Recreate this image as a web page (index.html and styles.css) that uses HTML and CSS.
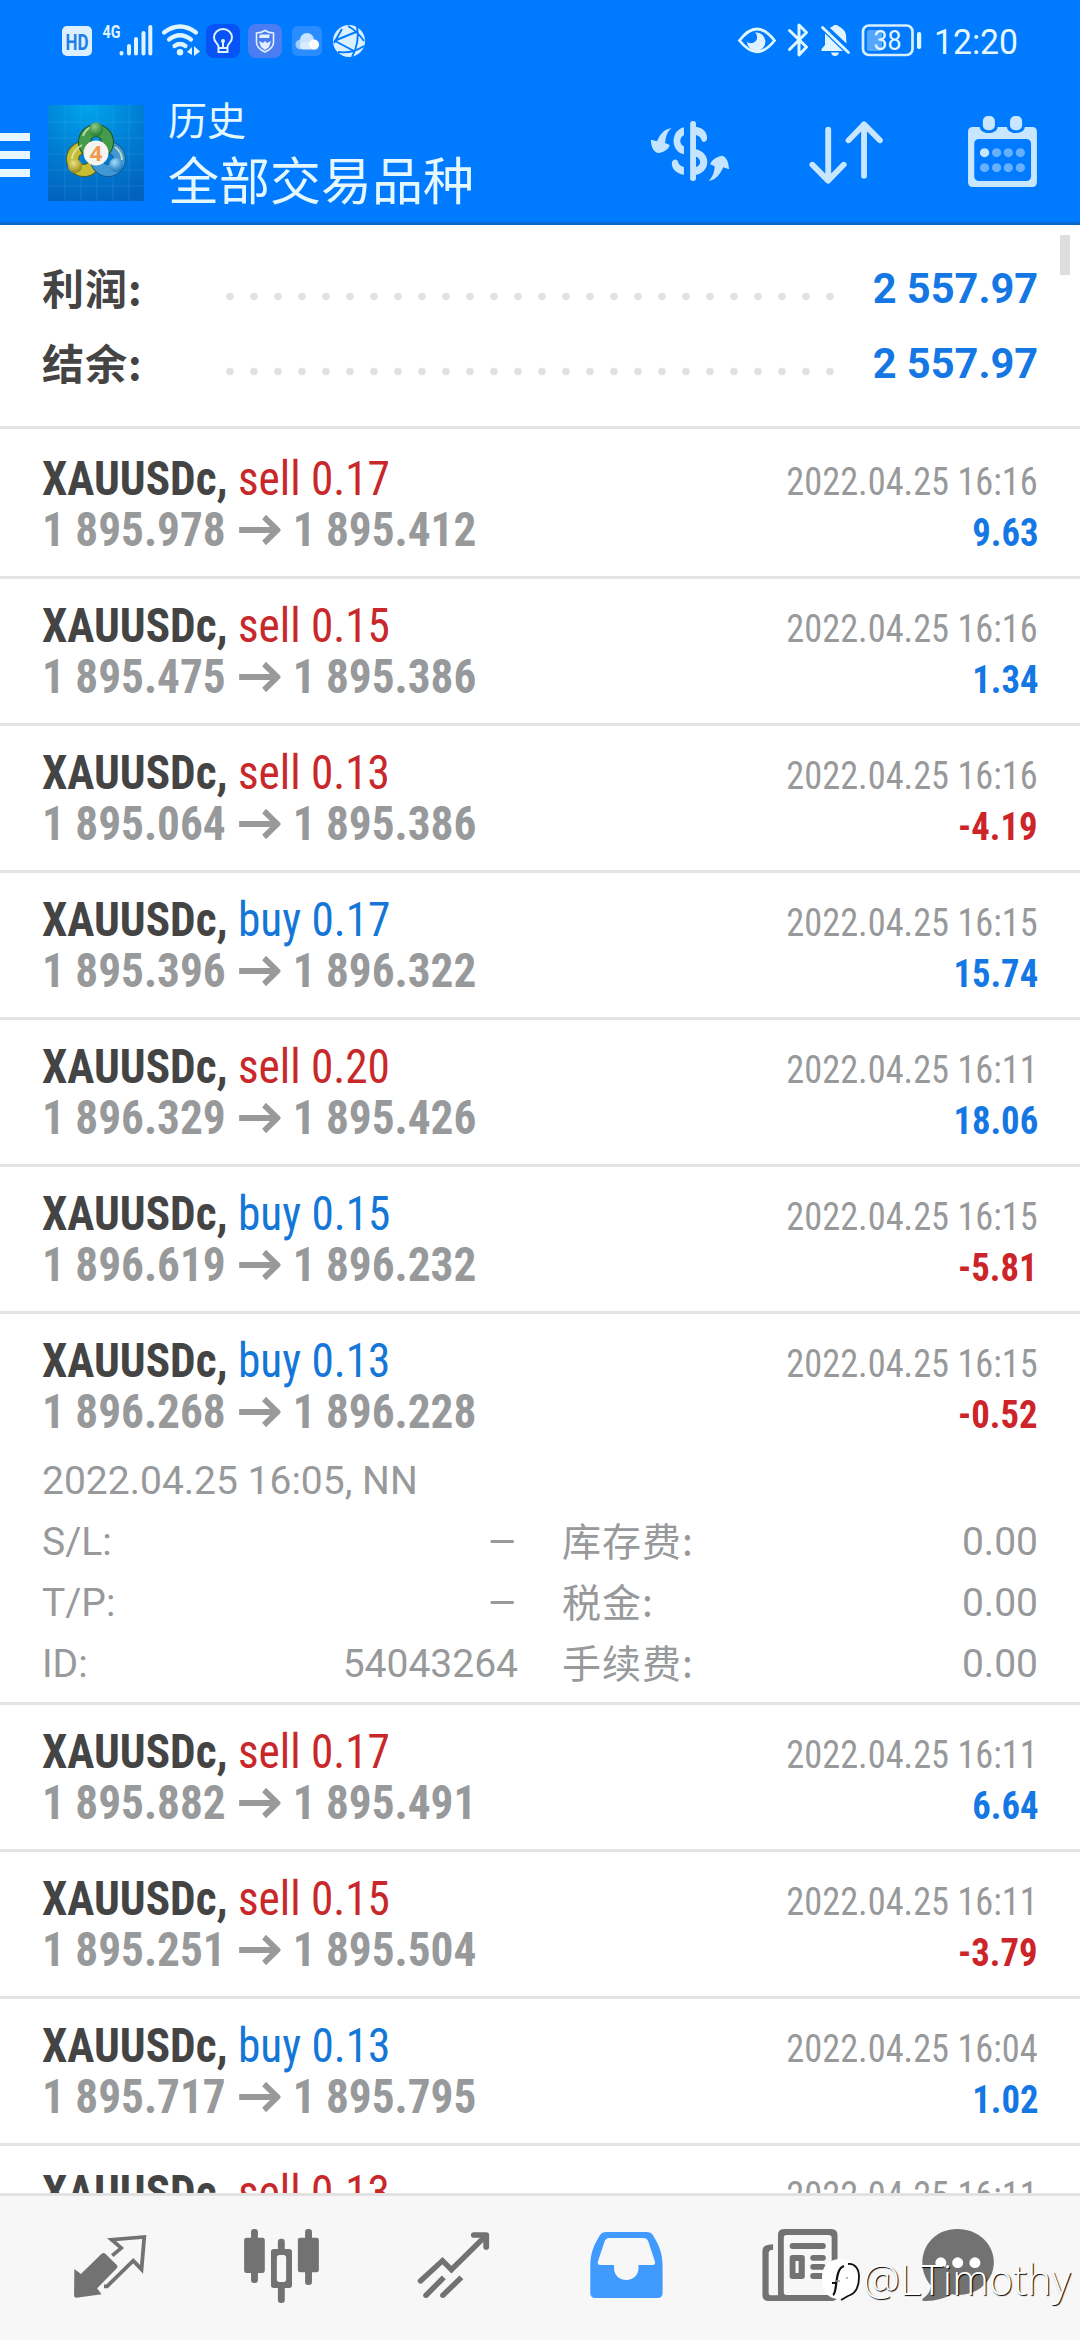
FILE: index.html
```html
<!DOCTYPE html>
<html lang="zh-CN">
<head>
<meta charset="utf-8">
<title>历史</title>
<link rel="stylesheet" href="styles.css">
</head>
<body>
<div class="screen">
  <header class="header">
    <div class="status">
      <svg class="status-left" viewBox="0 0 400 80">
        <rect x="62" y="26" width="30" height="30" rx="5" fill="#dcefff"/>
        <text x="65.5" y="49.500" class="st-hd" textLength="23" lengthAdjust="spacingAndGlyphs">HD</text>
        <text x="102.500" y="38" class="st-4g" textLength="18" lengthAdjust="spacingAndGlyphs">4G</text>
        <g stroke="#dff4ff" stroke-width="4" stroke-linecap="round"><path d="M121.500 53v.5M129 46v7.500M136 39v14.500M143.500 33v20.500M150.300 27v26.500"/></g>
        <g fill="none" stroke="#dff4ff" stroke-width="4.200" stroke-linecap="round"><path d="M164 32.500Q180 20.500 196 32.500M169 39.500Q180 31 191 39.500M174.500 46Q180 42 185.500 46"/></g>
        <circle cx="180" cy="52.300" r="3.200" fill="#dff4ff"/>
        <path d="M187 52l5-5v8zM194 46l6 5.500-6 4.500z" fill="#dff4ff"/>
        <rect x="206" y="24" width="34" height="34" rx="8" fill="#0853f5"/>
        <path d="M218.500 47c0-3-4.500-5-4.500-9.500a9 8.500 0 0 1 18 0c0 4.500-4.500 6.500-4.500 9.500v5h-9zM218.500 48h9M223 47v-6" fill="none" stroke="#dff4ff" stroke-width="2"/>
        <circle cx="223" cy="41" r="2" fill="#dff4ff"/>
        <rect x="248" y="24" width="34" height="34" rx="8" fill="#4a7df2"/>
        <path d="M265 30.500c3 2 5.500 2.500 8.500 2.500v9.500c0 5-4 7.500-8.500 9.500-4.500-2-8.500-4.500-8.500-9.500V33c3 0 5.500-.5 8.500-2.500z" fill="none" stroke="#e3eeff" stroke-width="1.600"/>
        <path d="M260 34.500h10l-1 3.500h-10zM259 41l4 2 2-2 2 2 4-2-2 6-4 3-4-3z" fill="#e3eeff"/>
        <rect x="292" y="26" width="30" height="30" rx="6" fill="#2a8dff"/>
        <circle cx="300.500" cy="44.500" r="5" fill="#9fceff"/><circle cx="307" cy="40" r="7" fill="#c8e3ff"/>
        <rect x="300" y="42" width="18.500" height="7.500" rx="3.700" fill="#d9ecff"/><circle cx="314" cy="44.500" r="5" fill="#fff"/>
        <circle cx="349" cy="41" r="16" fill="#daf0ff"/>
        <path d="M348 26Q357 31 364 41M357 26Q360 42 352 57M334 41L356 32M335 41L354 51M338 52Q352 54 364 46M334 43L342 29" fill="none" stroke="#007aff" stroke-width="1.900"/>
      </svg>
      <svg class="status-right" viewBox="730 0 350 80">
        <path d="M739.500 40.500Q757 17.500 774.500 40.500Q757 63 739.500 40.500z" fill="none" stroke="#dff8ff" stroke-width="2.800"/>
        <path d="M755 32.500a9.200 9.200 0 1 1-8 9c2 3 9 2 10-3 .5-3-1-5-2-6z" fill="#dff0ff"/>
        <path d="M789.500 30.500L806.500 47l-7.500 8V25l7.500 7.500L789.500 49.500" fill="none" stroke="#dff8ff" stroke-width="3" stroke-linecap="round" stroke-linejoin="round"/>
        <path d="M825 33.500L843 51h-21.500v-2l3.500-4zM830 28c2-1.500 3-1.500 4-3h3c1 1.500 8 3 9 10l.5 8.500zM831 52.500h8q-1 3.500-4 3.500t-4-3.500z" fill="#dff4ff"/>
        <path d="M822.500 27.500L848.500 52.500" stroke="#dff8ff" stroke-width="2.800" stroke-linecap="round"/>
        <rect x="863" y="25.500" width="49.500" height="29.500" rx="6" fill="none" stroke="#d5efff" stroke-width="2.700"/>
        <rect x="867" y="30" width="15" height="21" rx="2" fill="#55a6ff"/>
        <text x="873.500" y="49.700" class="st-bat" textLength="28" lengthAdjust="spacingAndGlyphs">38</text>
        <rect x="917" y="32" width="4.200" height="17" rx="2" fill="#dff8ff"/>
        <text x="934" y="54.300" class="st-time" textLength="84" lengthAdjust="spacingAndGlyphs">12:20</text>
      </svg>
    </div>
    <div class="appbar">
      <div class="menu"><i></i><i></i><i></i></div>
      <svg class="logo" viewBox="0 0 96 96">
        <defs>
          <radialGradient id="bg" cx=".42" cy="0" r="1.050"><stop offset="0" stop-color="#00a5ee"/><stop offset=".55" stop-color="#007cd2"/><stop offset="1" stop-color="#0262bd"/></radialGradient>
          <radialGradient id="g" cx=".4" cy=".3" r=".7"><stop offset="0" stop-color="#8ccb85"/><stop offset="1" stop-color="#217a30"/></radialGradient>
          <radialGradient id="y" cx=".4" cy=".3" r=".7"><stop offset="0" stop-color="#eee386"/><stop offset="1" stop-color="#958a13"/></radialGradient>
          <radialGradient id="b" cx=".4" cy=".3" r=".7"><stop offset="0" stop-color="#a4dcfa"/><stop offset="1" stop-color="#1b75bd"/></radialGradient>
        </defs>
        <rect width="96" height="96" fill="url(#bg)"/>
        <path d="M17 0v96M33 0v96M49 0v96M65 0v96M81 0v96M0 17h96M0 33h96M0 49h96M0 65h96M0 81h96" stroke="#49b2ec" stroke-opacity=".25"/>
        <g fill="none" stroke-width="11">
          <circle cx="36" cy="54" r="11.500" stroke="#55631b" stroke-width="13"/><circle cx="36" cy="54" r="11.500" stroke="#c6bd35"/>
          <circle cx="60" cy="54" r="11.500" stroke="#125c96" stroke-width="13"/><circle cx="60" cy="54" r="11.500" stroke="#4197d3"/>
          <circle cx="48" cy="37" r="11.500" stroke="#17522c" stroke-width="13"/><circle cx="48" cy="37" r="11.500" stroke="#459b49"/>
        </g>
        <path d="M34 40q-9 5-10 14M35 31q3-8 9-9M67 42q7 5 7 13" fill="none" stroke="#dcedb1" stroke-width="2" opacity=".8"/>
        <circle cx="48" cy="24.500" r="7" fill="url(#g)"/><circle cx="27" cy="61" r="7" fill="url(#y)"/><circle cx="68" cy="60" r="7" fill="url(#b)"/>
        <circle cx="48" cy="48" r="12.500" fill="#f4f4f1"/>
        <text x="48" y="56" class="logo-num">4</text>
      </svg>
      <div class="titles"><div class="t1">历史</div><div class="t2">全部交易品种</div></div>
      <div class="actions">
        <svg viewBox="290.400 300 290.400 300" preserveAspectRatio="none">
          <rect x="436" y="363" width="17" height="180" rx="8" fill="#c5e4ff"/>
          <path d="M418 382v24c-14 6-14 28 0 33v24c-40-8-40-72 0-81zM453 380c22 4 34 18 32 38-4 10-14 10-16 2-2-8-8-13-16-15zM453 448c44 10 44 68 0 77v-24c16-4 16-26 0-31zM383 488c3-12 15-12 18-2 2 8 8 13 17 15v23c-22-2-37-20-35-36z" fill="#c5e4ff"/>
          <path d="M382 384c-13 11-17 28-19 45l14 6c-3 10-12 20-32 24-15-2-22-17-23-40l18 5c8-20 19-36 42-40zM490 543c13-14 17-30 17-44l-13-6c4-12 16-22 36-26 12 5 18 20 19 41l-17-6c-9 22-22 38-42 41z" fill="#c5e4ff"/>
        </svg>
        <svg class="sort" viewBox="726 300 290.400 300" preserveAspectRatio="none">
          <path d="M837 389v152M791 494l46 48 45-48M941 527V373M896 421l45-48 46 48" fill="none" stroke="#c9e6ff" stroke-width="17" stroke-linecap="round" stroke-linejoin="round"/>
        </svg>
        <svg class="cal" viewBox="1190.600 300 290.400 300" preserveAspectRatio="none">
          <path fill-rule="evenodd" d="M1257 381h20c2 24 50 24 52 0h27c2 24 50 24 52 0h21q14 0 14 14v152q0 14-14 14h-172q-14 0-14-14V395q0-14 14-14zM1276 417q-15 0-15 15v96q0 15 15 15h135q15 0 15-15v-96q0-15-15-15z" fill="#c9e6ff"/>
          <rect x="1286" y="348" width="35" height="43" rx="15" fill="#c9e6ff"/><rect x="1365" y="348" width="35" height="43" rx="15" fill="#c9e6ff"/>
          <circle cx="1291" cy="458" r="13.500" fill="#c9e6ff"/>
          <g fill="#66b0ff"><circle cx="1326" cy="458" r="13.500"/><circle cx="1360" cy="458" r="13.500"/><circle cx="1395" cy="458" r="13.500"/><circle cx="1291" cy="503" r="13.500"/><circle cx="1326" cy="503" r="13.500"/><circle cx="1360" cy="503" r="13.500"/><circle cx="1395" cy="503" r="13.500"/></g>
        </svg>
      </div>
    </div>
  </header>

  <main class="content">
    <section class="summary">
      <div class="sum-row"><span class="sum-label">利润:</span><span class="dots"></span><span class="sum-value">2 557.97</span></div>
      <div class="sum-row"><span class="sum-label">结余:</span><span class="dots"></span><span class="sum-value">2 557.97</span></div>
      <div class="scrollbar"></div>
    </section>
    <div id="deals" class="deals"></div>
  </main>

  <nav class="tabs">
    <svg viewBox="69.700 198 499.500 432" preserveAspectRatio="none">
      <path d="M216 417l19 15 60-61q6-4 11 0l33 34q4 5 0 10l-57 60 13 18-73 10q-7 0-7-8z" fill="#727272"/>
      <path d="M326 377l26-23-28-25 95-8-8 97-24-26-76 77h-9" fill="none" stroke="#727272" stroke-width="11"/>
    </svg>
    <svg viewBox="569.200 198 499.500 432" preserveAspectRatio="none">
      <g fill="#727272"><rect x="729" y="297" width="20" height="162" rx="9"/><rect x="709" y="323" width="60" height="106" rx="7"/><rect x="886" y="297" width="20" height="168" rx="9"/><rect x="865" y="323" width="61" height="104" rx="7"/><rect x="807" y="326" width="20" height="193" rx="9"/><rect x="787" y="357" width="61" height="117" rx="8"/></g>
      <rect x="804" y="375" width="27" height="81" rx="8" fill="#f7f7f7"/>
    </svg>
    <svg viewBox="1068.700 198 499.500 432" preserveAspectRatio="none">
      <g fill="none" stroke="#727272" stroke-width="16"><path d="M1221 453l64-61 26 27 98-100" stroke-linecap="round"/><path d="M1376 315h36v36" stroke-width="17" stroke-linecap="round" stroke-linejoin="round"/><path d="M1237 496l52-54M1286 496l54-54"/></g>
      <circle cx="1237" cy="496" r="8" fill="#727272"/><circle cx="1286" cy="496" r="8" fill="#727272"/>
    </svg>
    <svg viewBox="0 198 499.500 432" preserveAspectRatio="none">
      <path fill-rule="evenodd" d="M192 306h118q12 0 18 10c20 32 28 60 28 92v81q0 15-14 15H161q-15 0-15-15v-81c0-32 8-60 28-92q6-10 18-10zM202 324q-10 0-14 9l-20 62q-2 10 7 10h40v9c0 48 71 48 71 0v-9h41q9 0 7-10l-20-62q-4-9-14-9z" fill="#419bff"/>
    </svg>
    <svg viewBox="499.500 198 499.500 432" preserveAspectRatio="none">
      <path fill-rule="evenodd" d="M708 297h138q18 0 18 18v180q0 18-18 18H664q-18 0-18-18V362q0-19 31-19v16q-13 0-13 10v119q0 8 8 8h18q2 0 1-10V315q0-18 17-18zM716 315q-8 0-8 8v164q0 8 8 8h122q9 0 9-8V323q0-8-9-8z" fill="#727272"/>
      <g fill="#727272"><rect x="725" y="339" width="105" height="18" rx="9"/><rect x="725" y="375" width="44" height="72" rx="8"/><rect x="785" y="375" width="45" height="17" rx="8"/><rect x="785" y="402" width="45" height="17" rx="8"/><rect x="785" y="429" width="45" height="18" rx="8"/></g>
      <rect x="742" y="393" width="9" height="36" fill="#f7f7f7"/>
    </svg>
    <svg viewBox="999 198 499.500 432" preserveAspectRatio="none">
      <path d="M1213 297c58 0 105 44 105 99 0 62-55 108-122 97-20 12-48 21-79 20-8 0-9-5-3-9 13-9 20-22 22-37-54-62-20-170 77-170z" fill="#727272"/>
      <g fill="#fff"><circle cx="1164" cy="398" r="16"/><circle cx="1213" cy="398" r="16"/><circle cx="1263" cy="398" r="16"/></g>
    </svg>
  </nav>

  <div class="watermark">
    <svg viewBox="820 2255 44 50">
      <path d="M841 2260c13 0 19 7 19 19 0 13-6 18-14 20l-6 4v-3c-12 0-18-7-18-21 0-13 7-19 19-19z" fill="#fff"/>
      <path d="M832 2284h4l1-3M833 2296c5-3 1-26 11-29" fill="none" stroke="#111" stroke-width="2.200"/>
      <path d="M836 2282h4M846 2279h2" stroke="#999" stroke-width="1.500"/>
      <path d="M848 2265c7-1 11 5 11 13 0 12-4 17-11 19l-7 4" fill="none" stroke="#111" stroke-width="1.800"/>
    </svg>
    <span>@LTimothy</span>
  </div>
</div>
<script src="deals.js"></script>
</body>
</html>
```
FILE: styles.css
```css
* { box-sizing: border-box; }
body { margin: 0; background: #fff; font-family: Roboto, "Noto Sans CJK SC", sans-serif; }
.screen { position: relative; width: 1080px; height: 2340px; overflow: hidden; display: flex; flex-direction: column; background: #fff; }

.header { flex: none; height: 225px; background: #007aff; border-bottom: 3px solid #0d68cb; }
.status { height: 80px; display: flex; justify-content: space-between; }
.status-left { width: 400px; height: 80px; }
.status-right { width: 350px; height: 80px; }
.st-hd { font: 700 22px Roboto, sans-serif; fill: #1c80e8; }
.st-4g { font: 700 19px Roboto, sans-serif; fill: #dff4ff; }
.st-bat { font: 400 27px Roboto, sans-serif; fill: #e6f8ff; }
.st-time { font: 400 35.500px Roboto, sans-serif; fill: #e6f8ff; }

.appbar { display: flex; height: 142px; }
.menu { width: 30px; margin: 53px 18px 0 0; display: flex; flex-direction: column; gap: 10px; }
.menu i { height: 8px; background: #e6f8ff; }
.logo { width: 96px; height: 96px; margin-top: 25px; }
.logo-num { font: 700 22px "Open Sans", sans-serif; fill: #ee9a4a; text-anchor: middle; }
.titles { margin-left: 24px; color: #e6f8ff; font-family: "Noto Sans CJK SC", sans-serif; white-space: nowrap; }
.t1 { font-size: 39px; line-height: 54px; margin-top: 11px; }
.t2 { font-size: 51px; line-height: 66px; }
.actions { margin-left: auto; margin-right: 30px; padding-top: 20px; display: flex; }
.actions svg { width: 100px; height: 100px; }
.actions .sort { margin-left: 50px; }
.actions .cal { margin-left: 60px; }

.content { flex: 1; min-height: 0; overflow: hidden; }
.summary { position: relative; height: 204px; padding: 26px 42px 0 42px; border-bottom: 3px solid #e4e4e4; }
.sum-row { display: flex; height: 75px; line-height: 75px; font-size: 42px; font-weight: 700; }
.sum-label { width: 176px; line-height: 71px; color: #444; font-family: "Noto Sans CJK SC", sans-serif; letter-spacing: 1px; }
.dots { width: 624px; height: 75px; background: radial-gradient(circle at 12px 45.500px, #e1e1e1 3.400px, transparent 4.200px) 0 0 / 24px 75px; }
.sum-value { margin-left: auto; color: #1477e4; white-space: pre; transform: scaleX(.99); transform-origin: right; }
.scrollbar { position: absolute; right: 10px; top: 10px; width: 10px; height: 40px; background: #dedede; }

.deal { padding: 21px 42px; border-bottom: 3px solid #e4e4e4; }
.deal:first-child { padding-top: 24px; }
.line { display: flex; justify-content: space-between; align-items: baseline; height: 51px; line-height: 51px; white-space: pre; font-size: 48px; font-stretch: 75%; font-family: "Roboto Condensed", Roboto, sans-serif; }
.order, .price { transform: scaleX(.943); transform-origin: left; }
.symbol { font-weight: 700; color: #444; }
.side-sell { color: #c9282b; }
.side-buy { color: #1477d8; }
.price { font-weight: 700; color: #97999b; }
.arrow { width: 44px; height: 30px; margin: 0 13px 0 14px; vertical-align: 1px; }
.time { font-size: 39px; color: #97999b; transform: scaleX(.932); transform-origin: right; }
.profit { font-size: 39px; font-weight: 700; color: #1477e4; transform: scaleX(.94); transform-origin: right; }
.profit.loss { color: #cc2428; }

.deal.open { padding-bottom: 7px; }
.details { margin-top: 14px; font-size: 39px; line-height: 61px; color: #97999b; }
.details .pair { display: grid; grid-template-columns: 476px 476px; column-gap: 44px; height: 61px; }
.pair div { display: flex; justify-content: space-between; height: 61px; }
.fee { font-family: "Noto Sans CJK SC", sans-serif; line-height: 55px; letter-spacing: 1px; }
.none { transform: scaleX(1.2); transform-origin: right; }
.opened { height: 61px; }

.tabs { flex: none; height: 147px; border-top: 3px solid #e2e2e2; background: #f7f7f7; padding-left: 24px; display: flex; }
.tabs svg { width: 172px; height: 144px; }

.watermark { position: absolute; left: 820px; top: 2254px; display: flex; }
.watermark svg { width: 44px; height: 50px; }
.watermark span { font: 300 41.500px/50px "Open Sans", sans-serif; color: #fff; text-shadow: 1px 1px 1px #000; margin-left: -1px; }
```
FILE: deals.js
```js
const deals = [
  ["sell", "0.17", "1 895.978", "1 895.412", "16:16", "9.63"],
  ["sell", "0.15", "1 895.475", "1 895.386", "16:16", "1.34"],
  ["sell", "0.13", "1 895.064", "1 895.386", "16:16", "-4.19"],
  ["buy", "0.17", "1 895.396", "1 896.322", "16:15", "15.74"],
  ["sell", "0.20", "1 896.329", "1 895.426", "16:11", "18.06"],
  ["buy", "0.15", "1 896.619", "1 896.232", "16:15", "-5.81"],
  ["buy", "0.13", "1 896.268", "1 896.228", "16:15", "-0.52", true],
  ["sell", "0.17", "1 895.882", "1 895.491", "16:11", "6.64"],
  ["sell", "0.15", "1 895.251", "1 895.504", "16:11", "-3.79"],
  ["buy", "0.13", "1 895.717", "1 895.795", "16:04", "1.02"],
  ["sell", "0.13", "", "", "16:11", ""]
];

const arrow = '<svg class="arrow" viewBox="0 0 44 30"><path d="M0 15h41M26.500 2l14 13-14 13" fill="none" stroke="#97999b" stroke-width="6"/></svg>';

const details = `<div class="details">
  <div class="opened">2022.04.25 16:05, NN</div>
  <div class="pair"><div><span>S/L:</span><span class="none">–</span></div><div><span class="fee">库存费:</span><span>0.00</span></div></div>
  <div class="pair"><div><span>T/P:</span><span class="none">–</span></div><div><span class="fee">税金:</span><span>0.00</span></div></div>
  <div class="pair"><div><span>ID:</span><span>54043264</span></div><div><span class="fee">手续费:</span><span>0.00</span></div></div>
</div>`;

document.getElementById("deals").innerHTML = deals.map(([side, lots, from, to, time, profit, open]) =>
  `<article class="deal${open ? " open" : ""}">` +
  `<div class="line"><span class="order"><span class="symbol">XAUUSDc,</span> <span class="side-${side}">${side} ${lots}</span></span><span class="time">2022.04.25 ${time}</span></div>` +
  (profit ? `<div class="line"><span class="price">${from}${arrow}${to}</span><span class="profit${profit[0] === "-" ? " loss" : ""}">${profit}</span></div>` : "") +
  (open ? details : "") + "</article>").join("");
```
